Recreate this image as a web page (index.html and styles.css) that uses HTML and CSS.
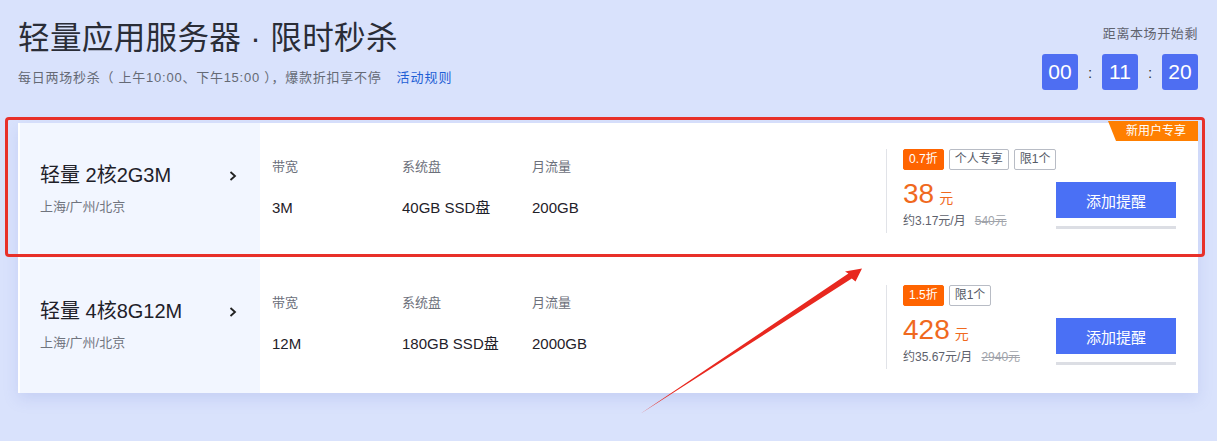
FILE: index.html
```html
<!DOCTYPE html>
<html lang="zh-CN">
<head>
<meta charset="utf-8">
<title>轻量应用服务器 · 限时秒杀</title>
<link rel="stylesheet" href="styles.css">
</head>
<body>
<div class="page">
  <header class="head">
    <div class="head-left">
      <h1 class="title">轻量应用服务器 · 限时秒杀</h1>
      <p class="subtitle">每日两场秒杀（ 上午10:00、下午15:00 ），爆款折扣享不停<a class="rule" href="#">活动规则</a></p>
    </div>
    <div class="head-right">
      <div class="cd-label">距离本场开始剩</div>
      <div class="countdown">
        <span class="cd-box">00</span><span class="cd-colon">:</span><span class="cd-box">11</span><span class="cd-colon">:</span><span class="cd-box">20</span>
      </div>
    </div>
  </header>

  <section class="card">
    <div class="row">
      <div class="row-name">
        <div class="name-top"><span class="name">轻量 2核2G3M</span><svg class="chev" width="8" height="10" viewBox="0 0 8 10"><polyline points="1.5,1 6,5 1.5,9" fill="none" stroke="#222" stroke-width="1.8"/></svg></div>
        <div class="region">上海/广州/北京</div>
      </div>
      <div class="specs">
        <div class="spec"><div class="spec-label">带宽</div><div class="spec-value">3M</div></div>
        <div class="spec"><div class="spec-label">系统盘</div><div class="spec-value">40GB SSD盘</div></div>
        <div class="spec"><div class="spec-label">月流量</div><div class="spec-value">200GB</div></div>
      </div>
      <div class="buy">
        <div class="price-box">
          <div class="tags"><span class="tag tag-off">0.7折</span><span class="tag">个人专享</span><span class="tag">限1个</span></div>
          <div class="price"><span class="num">38</span><span class="unit">元</span></div>
          <div class="price-sub">约3.17元/月<s class="orig">540元</s></div>
        </div>
        <div class="action">
          <button class="btn">添加提醒</button>
          <div class="bar"></div>
        </div>
      </div>
      <div class="badge">新用户专享</div>
    </div>
    <div class="row">
      <div class="row-name">
        <div class="name-top"><span class="name">轻量 4核8G12M</span><svg class="chev" width="8" height="10" viewBox="0 0 8 10"><polyline points="1.5,1 6,5 1.5,9" fill="none" stroke="#222" stroke-width="1.8"/></svg></div>
        <div class="region">上海/广州/北京</div>
      </div>
      <div class="specs">
        <div class="spec"><div class="spec-label">带宽</div><div class="spec-value">12M</div></div>
        <div class="spec"><div class="spec-label">系统盘</div><div class="spec-value">180GB SSD盘</div></div>
        <div class="spec"><div class="spec-label">月流量</div><div class="spec-value">2000GB</div></div>
      </div>
      <div class="buy">
        <div class="price-box">
          <div class="tags"><span class="tag tag-off">1.5折</span><span class="tag">限1个</span></div>
          <div class="price"><span class="num">428</span><span class="unit">元</span></div>
          <div class="price-sub">约35.67元/月<s class="orig">2940元</s></div>
        </div>
        <div class="action">
          <button class="btn">添加提醒</button>
          <div class="bar"></div>
        </div>
      </div>
    </div>
  </section>
</div>

<div class="mark-box"></div>
<svg class="mark-arrow" width="1217" height="441" viewBox="0 0 1217 441" xmlns="http://www.w3.org/2000/svg">
  <polygon points="640,414 848.4,273.6 845,271.5 862,268.5 855.5,281.5 851.8,278.6" fill="#e8281f"/>
</svg>
</body>
</html>
```

FILE: styles.css
```css
* { box-sizing: border-box; }
html, body { margin: 0; padding: 0; }
body {
  background: #d9e2fc;
  font-family: "Liberation Sans", Arial, "Noto Sans CJK SC", sans-serif;
  color: #222;
  width: 1217px;
  height: 441px;
  overflow: hidden;
  position: relative;
}
.page { padding: 0 19px 0 18px; }

.head { display: flex; justify-content: space-between; align-items: flex-start; }
.head-left { padding-top: 18px; }
.title {
  margin: 0;
  font-size: 31.6px;
  line-height: 40px;
  font-weight: normal;
  color: #2a2d37;
  letter-spacing: 0.3px;
}
.subtitle {
  margin: 10px 0 0;
  font-size: 13px;
  line-height: 20px;
  color: #656a75;
  letter-spacing: 0.75px;
}
.rule { color: #1f5fd5; text-decoration: none; margin-left: 15px; letter-spacing: 1px; }

.head-right { padding-top: 24px; display: flex; flex-direction: column; align-items: flex-end; }
.cd-label { font-size: 13px; line-height: 20px; color: #5f636e; letter-spacing: 0.6px; }
.countdown { display: flex; align-items: center; margin-top: 10px; }
.cd-box {
  width: 36px; height: 36px;
  background: #4e6ef2;
  color: #fff;
  border-radius: 3px;
  font-size: 21px;
  display: flex; align-items: center; justify-content: center;
}
.cd-colon { width: 24px; text-align: center; color: #333; font-size: 15px; }

.card {
  margin-top: 33px;
  background: #fff;
  padding-left: 2px;
  box-shadow: 0 6px 14px rgba(110, 130, 210, 0.18);
}
.row { position: relative; display: flex; height: 135px; }
.row + .row { margin-top: 1px; height: 134px; }
.row-name {
  width: 240px;
  flex-shrink: 0;
  background: #f2f6ff;
  padding: 38px 23px 0 20px;
}
.name-top { display: flex; justify-content: space-between; align-items: center; }
.name { font-size: 20px; line-height: 28px; color: #1f2129; }
.chev { display: block; margin-top: 1px; }
.region { margin-top: 8px; font-size: 13px; line-height: 20px; color: #70747e; }

.specs { display: flex; padding: 34px 0 0 12px; width: 626px; flex-shrink: 0; }
.spec { width: 130px; }
.spec-label { font-size: 13px; line-height: 20px; color: #6c707b; }
.spec-value { margin-top: 21px; font-size: 15px; line-height: 20px; color: #1f2129; }

.buy { display: flex; padding-top: 26px; }
.price-box {
  border-left: 1px solid #e1e3e8;
  height: 84px;
  width: 170px;
  flex-shrink: 0;
  padding-left: 16px;
}
.tags { display: flex; gap: 5px; white-space: nowrap; }
.tag {
  flex-shrink: 0;
  height: 21px;
  padding: 0 5px;
  border: 1px solid #b8bcc5;
  border-radius: 2px;
  font-size: 12px;
  line-height: 19px;
  color: #555a66;
}
.tag-off { background: #ff6400; border-color: #ff6400; color: #fff; }
.price { margin-top: 9px; color: #f0691e; line-height: 30px; white-space: nowrap; }
.num { font-size: 28px; }
.unit { font-size: 14px; margin-left: 5px; }
.price-sub { font-size: 12px; line-height: 16px; color: #5d616c; white-space: nowrap; }
.orig { color: #a0a3aa; margin-left: 9px; }

.action { padding-top: 33px; }
.btn {
  display: block;
  width: 120px; height: 36px;
  border: 0;
  background: #4a70f5;
  color: #fff;
  font-family: inherit;
  font-size: 15px;
  padding: 0;
}
.bar { width: 120px; height: 3px; background: #dcdee4; margin-top: 8px; }

.badge {
  position: absolute;
  top: -2px; right: 0;
  width: 90px; height: 20px;
  background: #ff7f00;
  color: #fff;
  font-size: 12px;
  line-height: 20px;
  text-align: center;
  padding-left: 6px;
  clip-path: polygon(0 0, 100% 0, 100% 100%, 8px 100%);
}

.mark-box {
  position: absolute;
  left: 5px; top: 117px;
  width: 1200px; height: 140px;
  border: 3px solid #e83029;
  border-radius: 4px;
}
.mark-arrow { position: absolute; left: 0; top: 0; pointer-events: none; }
```
